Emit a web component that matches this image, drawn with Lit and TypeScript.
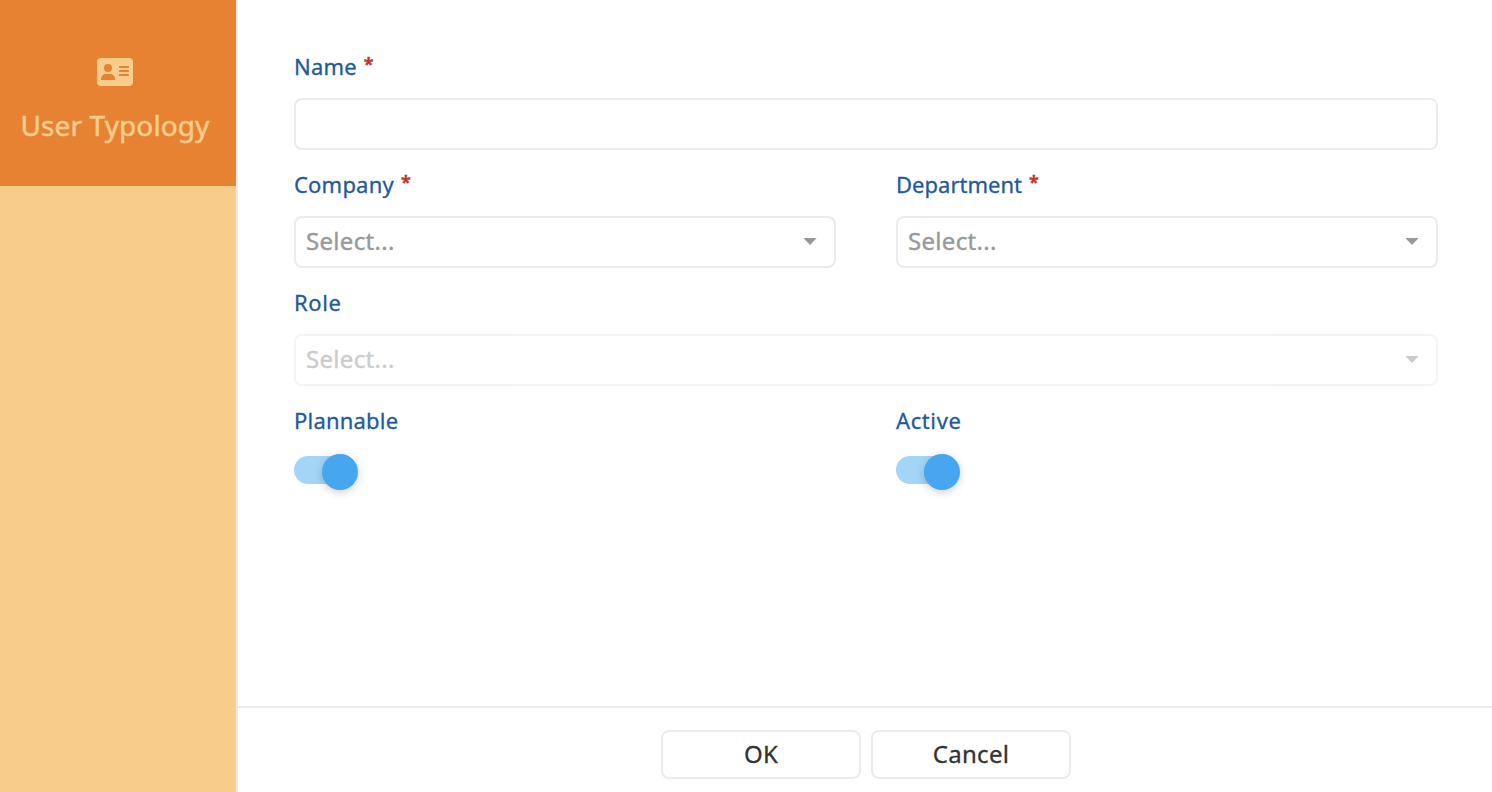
import { LitElement, html, css, svg } from "lit";
import { customElement, property } from "lit/decorators.js";

@customElement("form-field")
class FormField extends LitElement {
  @property() label = "";
  @property({ type: Boolean }) required = false;
  static styles = css`
    :host { display: block; height: 118px; min-width: 0; }
    .label { display: flex; height: 48px; line-height: 32px; color: #1f5a9c; font-size: 22px; letter-spacing: var(--track, 0.2px); white-space: nowrap; -webkit-text-stroke: 0.3px currentColor; }
    .star { color: #c0392b; margin-left: 7px; letter-spacing: 0; font-weight: 700; font-size: 18px; line-height: 28px; }
  `;
  render() {
    return html`<div class="label"><span>${this.label}</span>${this.required ? html`<span class="star">*</span>` : ""}</div><slot></slot>`;
  }
}

@customElement("select-box")
class SelectBox extends LitElement {
  @property({ type: Boolean }) disabled = false;
  static styles = css`
    .box { display: flex; align-items: center; justify-content: space-between; box-sizing: border-box; height: 52px; border: 2px solid #ebebeb; border-radius: 8px; padding: 0 17px 2px 10px; font-size: 24px; color: #999; }
    .text { line-height: 32px; padding-bottom: 1px; letter-spacing: 0.3px; -webkit-text-stroke: 0.4px currentColor; }
    .off { opacity: 0.5; }
    svg { display: block; }
  `;
  render() {
    return html`<div class="box ${this.disabled ? "off" : ""}"><span class="text">Select...</span><svg width="14" height="7" viewBox="0 0 14 7"><path d="M0.3 0H13.7L7 7z" fill="#999" /></svg></div>`;
  }
}

@customElement("toggle-switch")
class ToggleSwitch extends LitElement {
  static styles = css`
    .track { display: flex; justify-content: flex-end; width: 64px; height: 28px; margin-top: 4px; border-radius: 14px; background: linear-gradient(90deg, #a4d5f7 50px, transparent 50px); }
    .knob { width: 36px; height: 36px; margin-top: -2px; border-radius: 50%; background: #46a6f0; box-shadow: 0 2px 8px rgba(0, 0, 0, 0.2); flex: none; }
  `;
  render() {
    return html`<div class="track"><div class="knob"></div></div>`;
  }
}

@customElement("app-root")
class AppRoot extends LitElement {
  static styles = css`
    :host { display: flex; height: 100vh; overflow: hidden; background: #fff; font-family: "Noto Sans", sans-serif; }
    .side { width: 236px; flex: none; background: #f8cd8c; border-right: 2px solid #e9e9e9; }
    .tab { box-sizing: border-box; height: 186px; padding: 58px 6px 0 0; background: #e78232; color: #f8cd8c; display: flex; flex-direction: column; align-items: center; }
    .tab svg { display: block; }
    .title { margin-top: 21px; line-height: 36px; font-size: 28px; letter-spacing: 0.1px; white-space: nowrap; -webkit-text-stroke: 0.5px currentColor; }
    .main { flex: 1; display: flex; flex-direction: column; min-width: 0; }
    .form { flex: 1; padding: 50px 54px 0 56px; display: grid; grid-template-columns: 1fr 1fr; grid-auto-rows: 118px; column-gap: 60px; }
    .wide { grid-column: span 2; }
    .snug { --track: 0.02px; }
    .airy { --track: 0.6px; }
    .input { box-sizing: border-box; height: 52px; border: 2px solid #ebebeb; border-radius: 8px; }
    .foot { box-sizing: border-box; height: 86px; border-top: 2px solid #ebebeb; padding: 22px 0 0 2px; display: flex; justify-content: center; gap: 10px; }
    .btn { box-sizing: border-box; width: 200px; height: 49px; border: 2px solid #ebebeb; border-radius: 8px; background: #fff; color: #333; font: 400 24px/32px "Noto Sans", sans-serif; letter-spacing: 0.3px; padding: 0 0 2px; -webkit-text-stroke: 0.3px currentColor; }
  `;
  render() {
    const icon = svg`<rect width="36" height="28" rx="4" fill="#f8cd8c"/><g fill="#e78232"><circle cx="11" cy="10" r="4"/><path d="M4 22V20.8A4.8 4.8 0 0 1 8.8 16H13.2A4.8 4.8 0 0 1 18 20.8V22z"/><rect x="22" y="8" width="10" height="2" rx=".6"/><rect x="22" y="12" width="10" height="2" rx=".6"/><rect x="22" y="16" width="10" height="2" rx=".6"/></g>`;
    return html`
      <div class="side">
        <div class="tab">
          <svg width="36" height="28" viewBox="0 0 36 28">${icon}</svg>
          <div class="title">User Typology</div>
        </div>
      </div>
      <div class="main">
        <div class="form">
          <form-field class="wide" label="Name" required><div class="input"></div></form-field>
          <form-field label="Company" required><select-box></select-box></form-field>
          <form-field class="snug" label="Department" required><select-box></select-box></form-field>
          <form-field class="wide airy" label="Role"><select-box disabled></select-box></form-field>
          <form-field label="Plannable"><toggle-switch></toggle-switch></form-field>
          <form-field class="airy" label="Active"><toggle-switch></toggle-switch></form-field>
        </div>
        <div class="foot">
          <button class="btn">OK</button>
          <button class="btn">Cancel</button>
        </div>
      </div>`;
  }
}
